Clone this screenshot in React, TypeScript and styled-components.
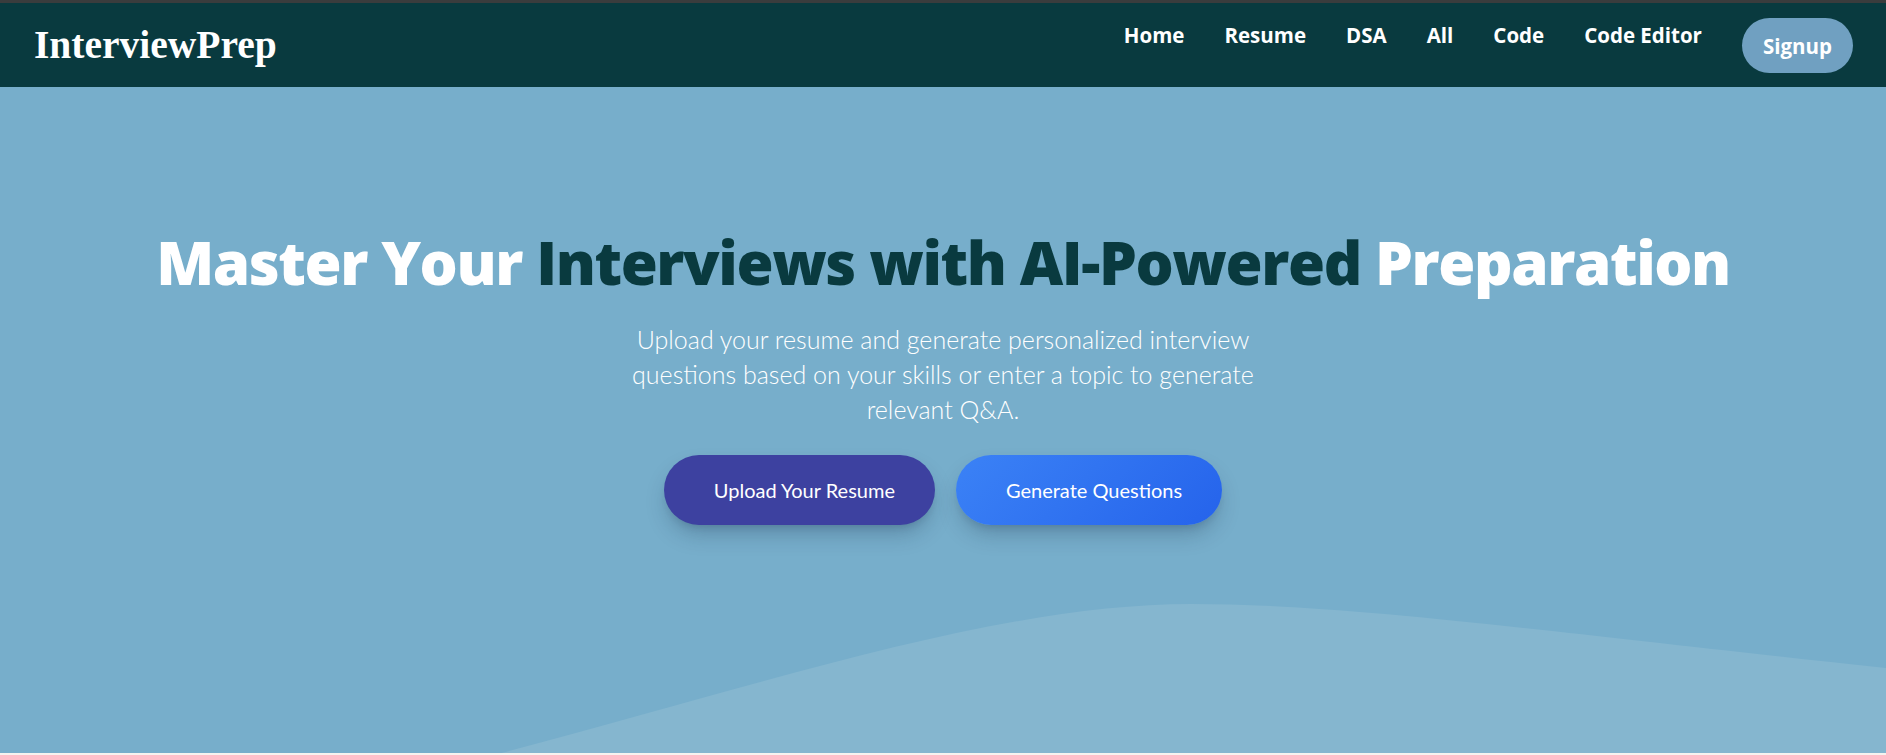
import React from "react";
import styled, { createGlobalStyle } from "styled-components";

const GlobalStyle = createGlobalStyle`
  html, body {
    margin: 0;
    padding: 0;
    background: #f7f3ef;
    font-family: "Lato", "Open Sans", sans-serif;
  }
  * { box-sizing: border-box; }
`;

const Page = styled.div`
  display: flex;
  flex-direction: column;
  width: 100%;
`;

const TopEdge = styled.div`
  height: 3px;
  background: #3a3c3d;
`;

const Navbar = styled.nav`
  height: 84px;
  background: #093a3f;
  display: flex;
  justify-content: space-between;
  align-items: flex-start;
  padding: 15px 33px 0 34px;
`;

const Logo = styled.div`
  font-family: "Liberation Serif", "Times New Roman", serif;
  font-weight: 700;
  font-size: 39.5px;
  line-height: 55px;
  color: #ffffff;
`;

const NavLinks = styled.div`
  display: flex;
  align-items: flex-start;
  gap: 40px;
`;

const NavLink = styled.a`
  font-family: "Open Sans", "Lato", sans-serif;
  font-size: 20.5px;
  font-weight: 700;
  line-height: 30px;
  margin-top: 2px;
  color: #ffffff;
  text-decoration: none;
  cursor: pointer;
`;

const SignupButton = styled.button`
  height: 55px;
  padding: 0 21px;
  border: none;
  border-radius: 9999px;
  background: #70a0c1;
  color: #ffffff;
  font-family: "Open Sans", "Lato", sans-serif;
  font-size: 20.5px;
  font-weight: 700;
  line-height: 30px;
  cursor: pointer;
`;

const Hero = styled.section`
  position: relative;
  height: 666px;
  background: #77aecb;
  overflow: hidden;
  display: flex;
  flex-direction: column;
  align-items: center;
  padding-top: 145px;
`;

const Wave = styled.svg`
  position: absolute;
  left: 0;
  bottom: 0;
  width: 100%;
  height: 153px;
  display: block;
`;

const Content = styled.div`
  position: relative;
  z-index: 1;
  display: flex;
  flex-direction: column;
  align-items: center;
  text-align: center;
`;

const Heading = styled.h1`
  margin: 0 0 30px;
  font-family: "Open Sans", "Lato", sans-serif;
  font-size: 60px;
  line-height: 60px;
  font-weight: 800;
  letter-spacing: -1.4px;
  color: #ffffff;
  white-space: nowrap;
`;

const Accent = styled.span`
  color: #093a3f;
`;

const Subtitle = styled.p`
  margin: 0 0 28px;
  max-width: 640px;
  font-size: 25px;
  line-height: 35px;
  font-weight: 300;
  color: #ffffff;
`;

const Actions = styled.div`
  display: flex;
  gap: 21px;
`;

const ActionButton = styled.button<{ $variant: "primary" | "secondary" }>`
  height: 70px;
  padding: 0 40px 0 50px;
  border: none;
  border-radius: 9999px;
  font-family: inherit;
  font-size: 20px;
  font-weight: 400;
  line-height: 30px;
  color: #ffffff;
  cursor: pointer;
  background: ${(p) =>
    p.$variant === "primary"
      ? "#3d41a0"
      : "linear-gradient(135deg, #3b82f6 0%, #2563eb 100%)"};
  box-shadow: 0 12px 22px -4px rgba(20, 40, 70, 0.28),
    0 5px 8px -5px rgba(20, 40, 70, 0.2);
`;

export default function App() {
  const links = ["Home", "Resume", "DSA", "All", "Code", "Code Editor"];
  return (
    <Page>
      <GlobalStyle />
      <TopEdge />
      <Navbar>
        <Logo>InterviewPrep</Logo>
        <NavLinks>
          {links.map((l) => (
            <NavLink key={l}>{l}</NavLink>
          ))}
          <SignupButton>Signup</SignupButton>
        </NavLinks>
      </Navbar>
      <Hero>
        <Wave viewBox="0 0 1886 153" preserveAspectRatio="none">
          <path
            d="M490,156 C770,82 1000,4 1191,4 C1350,4 1550,32 1886,68 L1886,156 Z"
            fill="#85b6cf"
          />
        </Wave>
        <Content>
          <Heading>
            Master Your <Accent>Interviews with AI-Powered</Accent> Preparation
          </Heading>
          <Subtitle>
            Upload your resume and generate personalized interview questions
            based on your skills or enter a topic to generate relevant Q&amp;A.
          </Subtitle>
          <Actions>
            <ActionButton $variant="primary">Upload Your Resume</ActionButton>
            <ActionButton $variant="secondary">Generate Questions</ActionButton>
          </Actions>
        </Content>
      </Hero>
    </Page>
  );
}
